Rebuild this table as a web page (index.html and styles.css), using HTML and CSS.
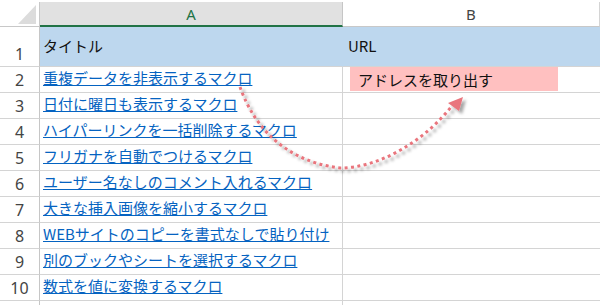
FILE: index.html
```html
<!DOCTYPE html>
<html lang="ja">
<head>
<meta charset="utf-8">
<link rel="stylesheet" href="styles.css">
</head>
<body>
<div class="sheet">
  <div class="grid">
    <div class="corner"><span class="tri"></span></div>
    <div class="colhead sel">A</div>
    <div class="colhead">B</div>

    <div class="rn r1">1</div>
    <div class="cell r1 fill">タイトル</div>
    <div class="cell r1 fill last">URL</div>

    <div class="rn">2</div>
    <div class="cell"><a class="lnk">重複データを非表示するマクロ</a></div>
    <div class="cell last"><span class="tag">アドレスを取り出す</span></div>

    <div class="rn">3</div>
    <div class="cell"><a class="lnk">日付に曜日も表示するマクロ</a></div>
    <div class="cell last"></div>

    <div class="rn">4</div>
    <div class="cell"><a class="lnk">ハイパーリンクを一括削除するマクロ</a></div>
    <div class="cell last"></div>

    <div class="rn">5</div>
    <div class="cell"><a class="lnk">フリガナを自動でつけるマクロ</a></div>
    <div class="cell last"></div>

    <div class="rn">6</div>
    <div class="cell"><a class="lnk">ユーザー名なしのコメント入れるマクロ</a></div>
    <div class="cell last"></div>

    <div class="rn">7</div>
    <div class="cell"><a class="lnk">大きな挿入画像を縮小するマクロ</a></div>
    <div class="cell last"></div>

    <div class="rn">8</div>
    <div class="cell"><a class="lnk">WEBサイトのコピーを書式なしで貼り付け</a></div>
    <div class="cell last"></div>

    <div class="rn">9</div>
    <div class="cell"><a class="lnk">別のブックやシートを選択するマクロ</a></div>
    <div class="cell last"></div>

    <div class="rn">10</div>
    <div class="cell"><a class="lnk">数式を値に変換するマクロ</a></div>
    <div class="cell last"></div>

    <div class="rn"></div>
    <div class="cell"></div>
    <div class="cell last"></div>
  </div>

  <svg class="arrow" width="600" height="305" viewBox="0 0 600 305" xmlns="http://www.w3.org/2000/svg">
    <defs>
      <filter id="sh" x="-20%" y="-20%" width="140%" height="140%">
        <feDropShadow dx="3" dy="3" stdDeviation="1.8" flood-color="#000" flood-opacity="0.35"/>
      </filter>
    </defs>
    <g filter="url(#sh)">
      <path d="M240,87 C250,115 275,160 340,168 C380,168 425,140 451,107" fill="none" stroke="#E9757D" stroke-width="3" stroke-dasharray="3 3.4"/>
      <polygon points="448,103 463,97 459,111" fill="#E9757D"/>
    </g>
  </svg>
</div>
</body>
</html>
```

FILE: styles.css
```css
html, body {
  margin: 0;
  padding: 0;
  background: #ffffff;
}

.sheet {
  position: relative;
  width: 600px;
  height: 305px;
  overflow: hidden;
  padding-top: 2px;
  box-sizing: border-box;
  font-family: "Noto Sans CJK JP", "Noto Sans", sans-serif;
}

.grid {
  display: grid;
  grid-template-columns: 40px 303px 257px;
  grid-template-rows: 25px 40px repeat(10, 26px);
}

.corner {
  position: relative;
  border-right: 1px solid #c8c8c8;
  border-bottom: 1px solid #c8c8c8;
  box-sizing: border-box;
  background: #ffffff;
}

.tri {
  position: absolute;
  right: 3px;
  bottom: 2px;
  width: 0;
  height: 0;
  border-left: 18px solid transparent;
  border-bottom: 19px solid #dcdcdc;
}

.colhead {
  box-sizing: border-box;
  display: flex;
  align-items: center;
  justify-content: center;
  font-family: "Noto Sans", sans-serif;
  font-size: 15px;
  color: #444444;
  border-right: 1px solid #d4d4d4;
  border-bottom: 1px solid #c8c8c8;
  background: #ffffff;
}

.colhead.sel {
  background: #e1e1e1;
  color: #217346;
  border-right: 1px solid #c6c6c6;
  border-bottom: 2px solid #217346;
  height: 25px;
}

.rn {
  box-sizing: border-box;
  display: flex;
  justify-content: center;
  align-items: flex-end;
  font-family: "Noto Sans", sans-serif;
  font-size: 16px;
  line-height: 20px;
  color: #444444;
  padding-bottom: 2px;
  border-right: 1px solid #c6c6c6;
  border-bottom: 1px solid #d4d4d4;
}

.cell {
  box-sizing: border-box;
  font-size: 15px;
  line-height: 20px;
  color: #111111;
  padding: 1px 0 0 3px;
  border-right: 1px solid #d4d4d4;
  border-bottom: 1px solid #d4d4d4;
  white-space: nowrap;
  overflow: visible;
}

.cell.last {
  border-right: none;
  padding-left: 5px;
}

.cell.r1 {
  padding-top: 9px;
}

.cell.fill {
  background: #bdd7ee;
  border-right-color: #bdd7ee;
}

.lnk {
  color: #0563c1;
  text-decoration: underline;
  text-decoration-thickness: 1px;
}

.tag {
  display: block;
  width: 208px;
  height: 24px;
  margin: -1px 0 0 2px;
  padding-left: 8px;
  line-height: 21px;
  padding-top: 2px;
  box-sizing: border-box;
  background: #ffc0c0;
  color: #111111;
}

.arrow {
  position: absolute;
  left: 0;
  top: 0;
  pointer-events: none;
}
```
